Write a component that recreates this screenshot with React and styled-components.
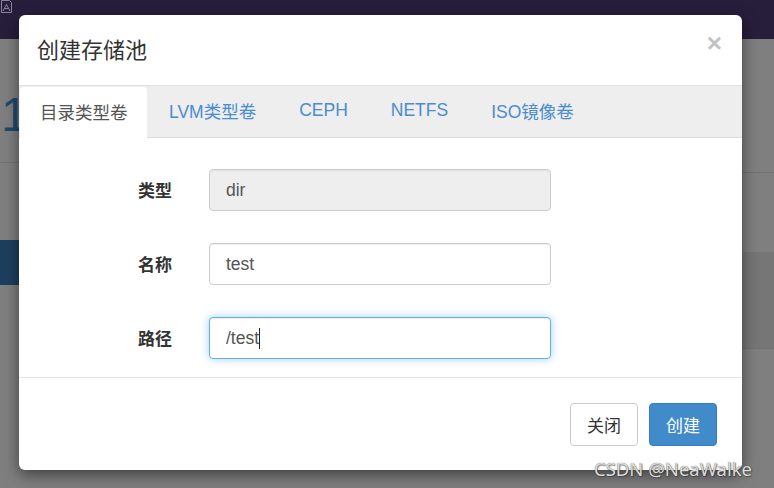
import React from 'react'
import styled, { createGlobalStyle } from 'styled-components';

const GlobalStyle = createGlobalStyle`
    html, body {
        margin: 0;
        padding: 0;
        background: #7f7f7f;
        font-family: "Liberation Sans", "Noto Sans CJK SC", sans-serif;
    }
`;

const Page = styled.div`
    position: relative;
    width: 774px;
    height: 488px;
    overflow: hidden;
    background: #7f7f7f;
`;

const TopBar = styled.div`
    height: 39px;
    background: #271e3c;
    display: flex;
    align-items: flex-start;
`;

const Backdrop = styled.div`
    display: flex;
    justify-content: space-between;
`;

const Pane = styled.div`
    width: ${p => p.$w}px;
    display: flex;
    flex-direction: column;
`;

const Block = styled.div`
    height: ${p => p.$h}px;
    background: ${p => p.$bg || 'transparent'};
    border-bottom: ${p => p.$line ? '1px solid #737373' : 'none'};
    box-sizing: border-box;
`;

const BigNumber = styled.div`
    font-size: 48px;
    line-height: 48px;
    color: #1f4a6c;
    padding: 52px 0 0 1px;
`;

const Modal = styled.div`
    position: absolute;
    left: 19px;
    top: 15px;
    width: 723px;
    height: 455px;
    background: #fff;
    border-radius: 6px;
    box-shadow: 0 5px 15px rgba(0, 0, 0, 0.5);
    display: flex;
    flex-direction: column;
    overflow: hidden;
    box-sizing: border-box;
`;

const Header = styled.div`
    height: 70px;
    display: flex;
    align-items: center;
    justify-content: space-between;
    padding: 0 20px 4px 18px;
    box-sizing: border-box;
`;

const Title = styled.h4`
    margin: 0;
    font-size: 22px;
    font-weight: normal;
    color: #333;
`;

const Close = styled.span`
    font-size: 26px;
    font-weight: bold;
    color: #c2c2c2;
    line-height: 1;
    margin-top: -10px;
`;

const Tabs = styled.ul`
    list-style: none;
    margin: 0;
    padding: 0 0 0 1px;
    height: 51px;
    display: flex;
    background: #eee;
    border-top: 1px solid #e2e2e2;
    border-bottom: 1px solid #ddd;
`;

const Tab = styled.li`
    padding: ${p => p.$active ? '0 19px 3px 20px' : '0 20.5px 3px'};
    margin-right: 2px;
    display: flex;
    align-items: center;
    font-size: 17.5px;
    color: ${p => p.$active ? '#555' : '#4a8cd0'};
    background: ${p => p.$active ? '#fff' : 'transparent'};
    border-radius: 4px 4px 0 0;
    margin-top: ${p => p.$active ? '1px' : '0'};
    margin-bottom: ${p => p.$active ? '-1px' : '0'};
`;

const Body = styled.div`
    padding: 31px 0 18px;
    display: flex;
    flex-direction: column;
    gap: 32px;
    border-bottom: 1px solid #e5e5e5;
`;

const Row = styled.div`
    display: grid;
    grid-template-columns: 153px 342px;
    column-gap: 37px;
    align-items: center;
`;

const Label = styled.label`
    text-align: right;
    font-size: 17px;
    font-weight: bold;
    color: #333;
    padding-bottom: 2px;
`;

const Field = styled.div`
    height: 42px;
    box-sizing: border-box;
    border: 1px solid ${p => p.$focused ? '#66afe9' : '#ccc'};
    border-radius: 4px;
    background: ${p => p.$disabled ? '#eee' : '#fff'};
    padding: 0 16px;
    display: flex;
    align-items: center;
    font-size: 17.5px;
    color: #555;
    box-shadow: ${p => p.$focused
        ? 'inset 0 1px 1px rgba(0,0,0,.075), 0 0 8px rgba(102,175,233,.6)'
        : 'inset 0 1px 1px rgba(0,0,0,.075)'};
`;

const Caret = styled.span`
    display: inline-block;
    width: 1px;
    height: 21px;
    background: #222;
`;

const Footer = styled.div`
    flex: 1;
    display: flex;
    justify-content: flex-end;
    align-items: flex-start;
    gap: 11px;
    padding: 25px 25px 0;
`;

const Button = styled.button`
    height: 43px;
    padding: 0 16px;
    font-family: inherit;
    font-size: 17px;
    border-radius: 4px;
    border: 1px solid ${p => p.$primary ? '#357ebd' : '#ccc'};
    background: ${p => p.$primary ? '#428bca' : '#fff'};
    color: ${p => p.$primary ? '#fff' : '#333'};
`;

const Watermark = styled.div`
    position: absolute;
    left: 594px;
    top: 456px;
    font-family: "Noto Sans", "Noto Sans CJK SC", sans-serif;
    font-size: 18.5px;
    color: #dcdcdc;
    text-shadow: 0 0 1px rgba(40, 40, 40, 0.8), 1px 1px 1px rgba(40, 40, 40, 0.5);
`;

const tabs = ['目录类型卷', 'LVM类型卷', 'CEPH', 'NETFS', 'ISO镜像卷'];

const App = () => {
  return (
    <Page>
        <GlobalStyle />
        <TopBar>
            <svg width="13" height="14" viewBox="0 0 13 14" fill="none" stroke="#8a86a0" strokeWidth="1">
                <path d="M1.5 0.5 H9.5 L11.5 2.5 V12.5 H1.5 Z" />
                <path d="M3 11 L6.5 4.5 L10 11" />
                <path d="M4.5 8.5 H8.5" />
            </svg>
        </TopBar>
        <Backdrop>
            <Pane $w={19}>
                <Block $h={124} $line><BigNumber>1</BigNumber></Block>
                <Block $h={77} />
                <Block $h={45} $bg="#1d3f5e" />
            </Pane>
            <Pane $w={32}>
                <Block $h={134} $line />
                <Block $h={79} />
                <Block $h={97} $bg="#767676" $line />
            </Pane>
        </Backdrop>
        <Modal>
            <Header>
                <Title>创建存储池</Title>
                <Close>×</Close>
            </Header>
            <Tabs>
                {tabs.map((t, i) => (
                    <Tab key={t} $active={i === 0}>{t}</Tab>
                ))}
            </Tabs>
            <Body>
                <Row>
                    <Label>类型</Label>
                    <Field $disabled>dir</Field>
                </Row>
                <Row>
                    <Label>名称</Label>
                    <Field>test</Field>
                </Row>
                <Row>
                    <Label>路径</Label>
                    <Field $focused>/test<Caret /></Field>
                </Row>
            </Body>
            <Footer>
                <Button>关闭</Button>
                <Button $primary>创建</Button>
            </Footer>
        </Modal>
        <Watermark>CSDN @NeaWalke</Watermark>
    </Page>
  )
}

export default App
